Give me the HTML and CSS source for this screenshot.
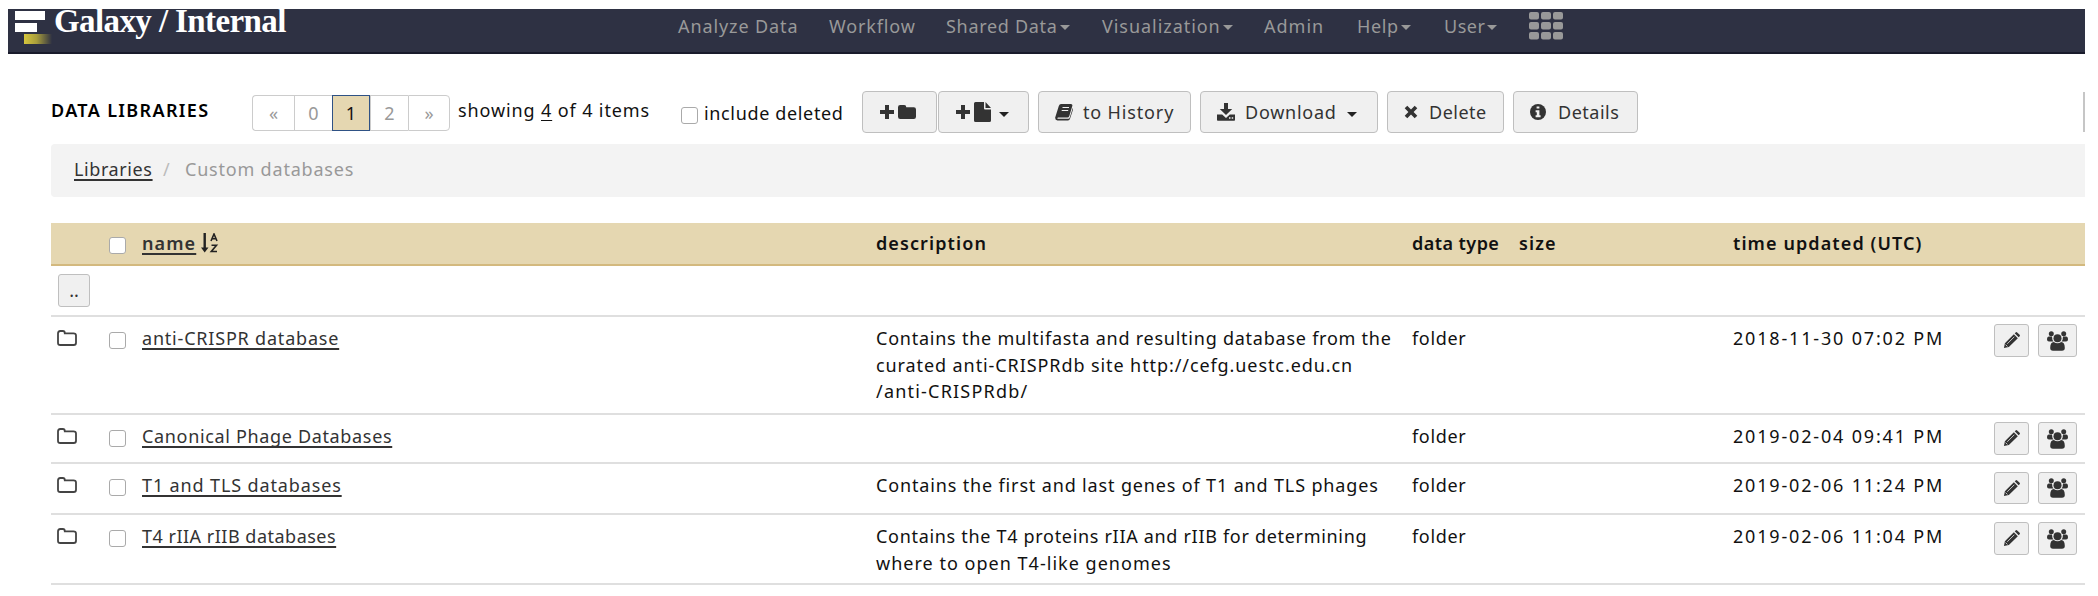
FILE: index.html
```html
<!DOCTYPE html>
<html lang="en">
<head>
<meta charset="utf-8">
<title>Galaxy / Internal</title>
<link rel="stylesheet" href="styles.css">
</head>
<body>
<svg width="0" height="0" class="defs">
  <symbol id="plus" viewBox="0 0 16 16"><path d="M6 1h4v5h5v4h-5v5H6v-5H1V6h5z"/></symbol>
  <symbol id="folder" viewBox="0 0 18 16"><path d="M0 3.200Q0 1 2.200 1h4Q8.300 1 8.300 3.200h7.500Q18 3.200 18 5.400v7.400q0 2.200-2.200 2.200H2.200Q0 15 0 12.800z"/></symbol>
  <symbol id="folder-o" viewBox="0 0 20 16"><path d="M1 3.500Q1 1 3.300 1h2.500q2 0 2 2.300h8.700Q19 3.300 19 5.500v7.200q0 2.300-2.300 2.300H3.300Q1 15 1 12.700z" fill="none" stroke="currentColor" stroke-width="1.800"/></symbol>
  <symbol id="file" viewBox="0 0 17 20"><path d="M1.500 0H10v6.500q0 1 1 1h6v11q0 1.500-1.500 1.500h-14Q0 20 0 18.500v-17Q0 0 1.500 0zM11.500 0L17 6h-5.500z"/></symbol>
  <symbol id="book" viewBox="0 0 18 18"><path d="M6 1h10q1.800.3 1.300 2l-3 10q-.5 1.500-2 1.500H3.200q-1.200.3-.6 1.300h10.800q1 0 1.300-1L17.800 5q.5 1 0 2.200L15 15.800Q14.500 17.500 13 17.500H2.500Q0 17.200.2 14.500L3.800 3Q4.500 1 6 1z"/><path d="M7.500 4.500h6.500M6.700 7.500h6.500" stroke="#f0f0f0" stroke-width="1.200"/></symbol>
  <symbol id="download" viewBox="0 0 18 18"><path d="M7 0h4v6h4.200L9 12 2.800 6H7zM0 11.500h5.200L9 15l3.800-3.500H18V17q0 .8-.8.800H.8Q0 17.800 0 17z"/><path d="M12 15h1.500M14.700 15h1.500" stroke="#f0f0f0" stroke-width="1.300"/></symbol>
  <symbol id="times" viewBox="0 0 14 14"><path d="M3.300.7L7 4.400 10.700.7l2.600 2.600L9.600 7l3.700 3.700-2.600 2.600L7 9.600l-3.700 3.700L.7 10.700 4.400 7 .7 3.300z"/></symbol>
  <symbol id="info" viewBox="0 0 16 16"><circle cx="8" cy="8" r="8"/><path d="M6.600 2.500h2.800v2H6.600zM5.600 6.300h3.800v5h1.200v1.900h-5v-1.900h1.200v-3H5.600z" fill="#f0f0f0"/></symbol>
  <symbol id="pencil" viewBox="0 0 18 18"><path d="M1 17l1-5.200L11.500 2.300l4.200 4.200L6.200 16zM12.400 1.400l1-1q.8-.7 1.600 0l2.600 2.600q.7.800 0 1.600l-1 1z"/><path d="M2.700 13.300l2 2M4.500 12.500L12 5" stroke="#f0f0f0" stroke-width=".8"/></symbol>
  <symbol id="users" viewBox="0 0 21 20"><circle cx="4.300" cy="2.800" r="2.500"/><circle cx="16.700" cy="2.800" r="2.500"/><path d="M0 8.500Q0 5.500 2 5.500h3Q5 9 6.500 10.500H2Q0 10.500 0 8.500zM21 8.500q0-3-2-3h-3q0 3.500-1.500 5H19q2 0 2-2z"/><circle cx="10.500" cy="7.200" r="4"/><path d="M3.200 17q0-5.800 3.600-6 3.700 2.600 7.400 0 3.600.2 3.600 6 0 2.700-2.800 2.700H6Q3.200 19.700 3.200 17z"/></symbol>
  <symbol id="sort" viewBox="0 0 18 20"><path d="M2.500 0h2.400v14.500h2.600L3.700 19.500 0 14.500h2.500z"/><path d="M10 8l3-7 3 7M11 5.800h4M10.500 12.300h5L10.300 18.500h5.700" fill="none" stroke="currentColor" stroke-width="1.600"/></symbol>
  <symbol id="grid" viewBox="0 0 34 28"><path d="M2 0h6q2 0 2 2v3.500q0 2-2 2H2q-2 0-2-2V2q0-2 2-2zM14 0h6q2 0 2 2v3.500q0 2-2 2h-6q-2 0-2-2V2q0-2 2-2zM26 0h6q2 0 2 2v3.500q0 2-2 2h-6q-2 0-2-2V2q0-2 2-2zM2 10h6q2 0 2 2v3.500q0 2-2 2H2q-2 0-2-2V12q0-2 2-2zM14 10h6q2 0 2 2v3.500q0 2-2 2h-6q-2 0-2-2V12q0-2 2-2zM26 10h6q2 0 2 2v3.500q0 2-2 2h-6q-2 0-2-2V12q0-2 2-2zM2 20h6q2 0 2 2v3.500q0 2-2 2H2q-2 0-2-2V22q0-2 2-2zM14 20h6q2 0 2 2v3.500q0 2-2 2h-6q-2 0-2-2V22q0-2 2-2zM26 20h6q2 0 2 2v3.500q0 2-2 2h-6q-2 0-2-2V22q0-2 2-2z"/></symbol>
</svg>
<div class="page">
  <header class="masthead">
    <div class="logo"><i class="bar bar-a"></i><i class="bar bar-b"></i><i class="bar bar-c"></i></div>
    <div class="brand">Galaxy / Internal</div>
    <nav class="nav">
      <a class="n-analyze">Analyze Data</a>
      <a class="n-workflow">Workflow</a>
      <a class="n-shared">Shared Data<i class="caret"></i></a>
      <a class="n-visual">Visualization<i class="caret"></i></a>
      <a class="n-admin">Admin</a>
      <a class="n-help">Help<i class="caret"></i></a>
      <a class="n-user">User<i class="caret"></i></a>
      <svg class="apps"><use href="#grid"/></svg>
    </nav>
  </header>
  <main class="content">
    <div class="toolbar">
      <div class="title">DATA LIBRARIES</div>
      <div class="pager">
        <span class="pg wide">«</span><span class="pg">0</span><span class="pg active">1</span><span class="pg">2</span><span class="pg wide">»</span>
      </div>
      <div class="showing">showing <u>4</u> of 4 items</div>
      <label class="include"><i class="check"></i><span>include deleted</span></label>
      <div class="buttons">
        <button class="btn b-folder"><svg class="i-plus"><use href="#plus"/></svg><svg class="i-folder"><use href="#folder"/></svg></button>
        <button class="btn b-file"><svg class="i-plus"><use href="#plus"/></svg><svg class="i-file"><use href="#file"/></svg><i class="caret"></i></button>
        <button class="btn b-history"><svg class="i-book"><use href="#book"/></svg><span>to History</span></button>
        <button class="btn b-download"><svg class="i-book"><use href="#download"/></svg><span>Download</span><i class="caret"></i></button>
        <button class="btn b-delete"><svg class="i-times"><use href="#times"/></svg><span>Delete</span></button>
        <button class="btn b-details"><svg class="i-info"><use href="#info"/></svg><span>Details</span></button>
      </div>
      <div class="edge"></div>
    </div>
    <div class="crumbs"><a class="c-lib">Libraries</a><span class="slash">/</span><span class="c-cur">Custom databases</span></div>
    <div class="table">
      <div class="row head">
        <div></div><div><i class="check"></i></div>
        <div class="name"><a>name</a><svg class="i-sort"><use href="#sort"/></svg></div>
        <div class="h-desc">description</div><div class="h-type">data type</div><div>size</div><div class="h-time">time updated (UTC)</div><div></div>
      </div>
      <div class="row up"><button class="sq dots">..</button></div>
      <div class="row r1">
        <div><svg class="i-fo"><use href="#folder-o"/></svg></div><div><i class="check"></i></div>
        <div class="name"><a class="a1">anti-CRISPR database</a></div>
        <div class="desc"><span class="d1">Contains the multifasta and resulting database from the</span><br><span class="d2">curated anti-CRISPRdb site http://cefg.uestc.edu.cn</span><br><span class="d3">/anti-CRISPRdb/</span></div>
        <div class="type">folder</div><div></div><div class="time">2018-11-30 07:02 PM</div>
        <div class="acts"><button class="sq edit"><svg class="i-pen"><use href="#pencil"/></svg></button><button class="sq share"><svg class="i-users"><use href="#users"/></svg></button></div>
      </div>
      <div class="row r2">
        <div><svg class="i-fo"><use href="#folder-o"/></svg></div><div><i class="check"></i></div>
        <div class="name"><a class="a2">Canonical Phage Databases</a></div>
        <div class="desc"></div>
        <div class="type">folder</div><div></div><div class="time">2019-02-04 09:41 PM</div>
        <div class="acts"><button class="sq edit"><svg class="i-pen"><use href="#pencil"/></svg></button><button class="sq share"><svg class="i-users"><use href="#users"/></svg></button></div>
      </div>
      <div class="row r3">
        <div><svg class="i-fo"><use href="#folder-o"/></svg></div><div><i class="check"></i></div>
        <div class="name"><a class="a3">T1 and TLS databases</a></div>
        <div class="desc"><span class="d4">Contains the first and last genes of T1 and TLS phages</span></div>
        <div class="type">folder</div><div></div><div class="time">2019-02-06 11:24 PM</div>
        <div class="acts"><button class="sq edit"><svg class="i-pen"><use href="#pencil"/></svg></button><button class="sq share"><svg class="i-users"><use href="#users"/></svg></button></div>
      </div>
      <div class="row r4">
        <div><svg class="i-fo"><use href="#folder-o"/></svg></div><div><i class="check"></i></div>
        <div class="name"><a class="a4">T4 rIIA rIIB databases</a></div>
        <div class="desc"><span class="d5">Contains the T4 proteins rIIA and rIIB for determining</span><br><span class="d6">where to open T4-like genomes</span></div>
        <div class="type">folder</div><div></div><div class="time">2019-02-06 11:04 PM</div>
        <div class="acts"><button class="sq edit"><svg class="i-pen"><use href="#pencil"/></svg></button><button class="sq share"><svg class="i-users"><use href="#users"/></svg></button></div>
      </div>
    </div>
  </main>
</div>
</body>
</html>
```
FILE: styles.css
```css
* { box-sizing: border-box; }
body { margin: 0; background: #fff; color: #111; font: 18px/26.500px "Noto Sans", sans-serif; overflow: hidden; }
.defs { display: block; position: absolute; }
svg { fill: currentColor; display: block; flex: none; }
.page { width: 2098px; height: 596px; padding: 9px 13px 0 8px; }

.masthead { height: 45px; background: #2e3143; border-bottom: 2px solid #191b2b; display: flex; white-space: nowrap; }
.logo { width: 46px; padding: 2px 0 0 7px; }
.bar { display: block; height: 9px; background: #fff; }
.bar-a { width: 30px; }
.bar-b { width: 22px; margin-top: 3px; }
.bar-c { width: 28px; height: 10px; margin: 2px 0 0 9px; background: linear-gradient(90deg, #d6c63c, #a99e3c 45%, #2e3143); }
.brand { width: 624px; font: bold 33px/36px "Liberation Serif", serif; letter-spacing: -.6px; color: #fff; margin-top: -6px; }
.nav { display: flex; color: #999; padding-top: 4px; }
.nav a { flex: none; display: flex; align-items: flex-start; }
.caret { display: block; flex: none; border: 5px solid transparent; border-top-color: currentColor; border-bottom: 0; }
.nav .caret { margin: 12px 0 0 2px; }
.n-analyze { width: 151px; letter-spacing: .9px; }
.n-workflow { width: 117px; letter-spacing: .85px; }
.n-shared { width: 156px; letter-spacing: .7px; }
.n-visual { width: 162px; letter-spacing: .95px; }
.n-admin { width: 93px; letter-spacing: 1px; }
.n-help { width: 87px; letter-spacing: .6px; }
.n-user { width: 85px; letter-spacing: .5px; }
.apps { width: 34px; height: 28px; margin-top: -1px; }

.content { padding-left: 43px; }
.toolbar { height: 90px; display: flex; padding-top: 37px; white-space: nowrap; }
.title { width: 201px; font-weight: 600; letter-spacing: 1.350px; color: #000; padding-top: 6px; }
.pager { display: flex; width: 206px; height: 36px; margin-top: 4px; color: #999; }
.pg { width: 38px; border: 1px solid #ccc; border-width: 1px 0 1px 1px; text-align: center; line-height: 34px; }
.pg.wide { width: 42px; }
.pg:first-child { border-radius: 4px 0 0 4px; }
.pg:last-child { border-right-width: 1px; border-radius: 0 4px 4px 0; }
.pg.active { background: #e5d7b1; border: 1px solid #2f5285; color: #111; }
.showing { width: 223px; padding-top: 6px; letter-spacing: .88px; }
.showing u { text-underline-offset: 3px; }
.include { display: flex; width: 181px; padding-top: 9px; letter-spacing: .65px; }
.include .check { margin: 7px 6px 0 0; }
.check { display: block; flex: none; width: 17px; height: 17px; border: 1px solid #aaa; border-radius: 3px; background: #fff; }
.buttons { display: flex; width: 1221px; }
.btn, .sq { background: #f0f0f0; border: 1px solid #bfbfbf; border-radius: 4px; padding: 0; font: inherit; color: #333; display: flex; align-items: center; flex: none; }
.btn { height: 42px; padding-left: 16px; margin-right: 9px; }
.b-folder { width: 75px; margin-right: 1px; }
.b-file { width: 91px; }
.b-history { width: 153px; letter-spacing: .85px; }
.b-download { width: 178px; letter-spacing: .75px; }
.b-delete { width: 117px; letter-spacing: .5px; }
.b-details { width: 125px; letter-spacing: .5px; }
.i-plus { width: 16px; height: 16px; margin-right: 3px; }
.i-folder { width: 18px; height: 16px; }
.i-file { width: 17px; height: 20px; }
.btn .caret { color: #222; margin: 5px 0 0 8px; }
.b-download .caret { margin-left: 10px; }
.i-book { width: 18px; height: 18px; margin-right: 10px; }
.i-times { width: 14px; height: 14px; margin-right: 11px; }
.i-info { width: 16px; height: 16px; margin-right: 12px; }
.edge { width: 2px; height: 40px; margin: 1px 0 0; background: #c6c6c6; }

.crumbs { height: 53px; background: #f3f3f3; border-radius: 4px 0 0 4px; display: flex; padding: 12px 0 0 23px; white-space: nowrap; }
.crumbs a, .name a { text-decoration: underline; text-underline-offset: 3px; text-decoration-thickness: 1.500px; text-decoration-skip-ink: none; color: #333; }
.c-lib { width: 89px; letter-spacing: .6px; }
.slash { width: 22px; color: #bbb; }
.c-cur { color: #999; letter-spacing: .8px; }

.table { margin-top: 26px; }
.row { display: grid; grid-template-columns: 58px 33px 734px 536px 107px 214px 261px 91px; border-bottom: 2px solid #dfdfdf; padding-top: 8px; white-space: nowrap; }
.head { height: 43px; background: #e5d7b1; border-bottom-color: #d3b97e; font-weight: 600; letter-spacing: 1.100px; padding-top: 7px; }
.h-type { letter-spacing: .45px; }
.row .check { margin-top: 7px; }
.name { display: flex; align-items: flex-start; }
.a1 { letter-spacing: .8px; }
.a2 { letter-spacing: .66px; }
.a3 { letter-spacing: .87px; }
.a4 { letter-spacing: .5px; }
.d1 { letter-spacing: .76px; }
.d2 { letter-spacing: .91px; }
.d3 { letter-spacing: 1.200px; }
.d4 { letter-spacing: .85px; }
.d5 { letter-spacing: .69px; }
.d6 { letter-spacing: 1.020px; }
.type { letter-spacing: .67px; }
.time { letter-spacing: 1.820px; }
.i-sort { width: 18px; height: 20px; margin: 3px 0 0 5px; color: #222; }
.up { height: 51px; }
.r1 { height: 98px; }
.r2 { height: 49px; }
.r3 { height: 51px; }
.r4 { height: 70px; }
.i-fo { width: 20px; height: 16px; margin: 5px 0 0 6px; color: #444; }
.sq { height: 33px; border-radius: 3px; justify-content: center; }
.dots { width: 32px; margin-left: 7px; }
.acts { display: flex; margin-top: -1px; }
.edit { width: 35px; margin-right: 9px; }
.share { width: 39px; }
.i-pen { width: 17px; height: 17px; }
.i-users { width: 21px; height: 20px; }
.r3 .sq { height: 32px; margin-top: 1px; }
```
